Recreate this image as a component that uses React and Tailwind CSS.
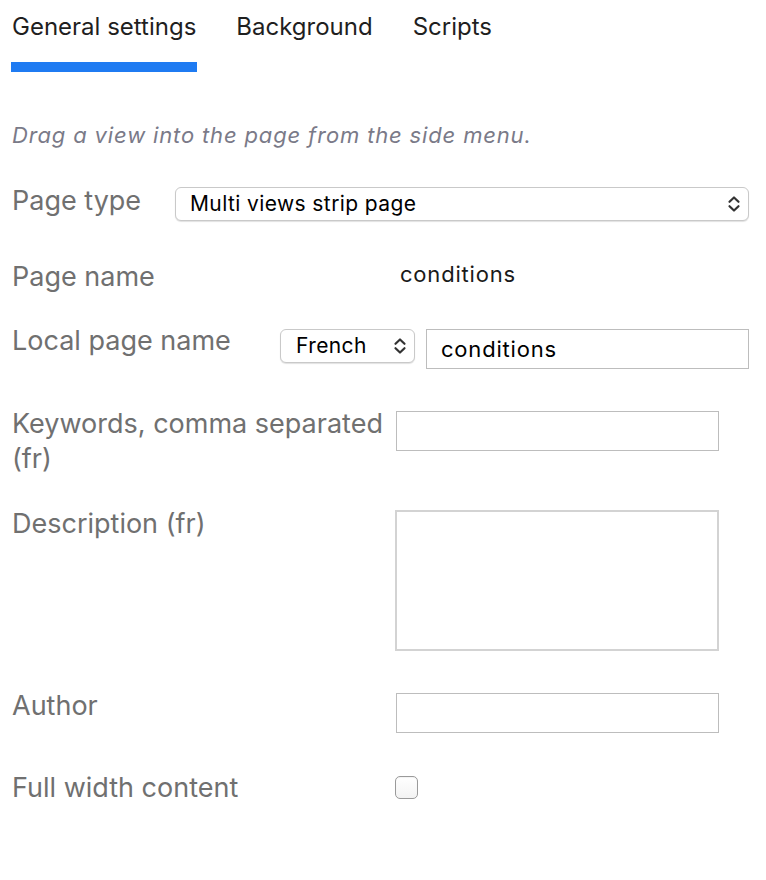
import React from "react";

function Chevrons({ className = "" }) {
  return (
    <svg className={className} width="14" height="18" viewBox="0 0 14 18" fill="none" stroke="#333" strokeWidth="2.2" strokeLinecap="round" strokeLinejoin="round">
      <path d="M2.5 6.8 L7 2.5 L11.5 6.8" />
      <path d="M2.5 11.2 L7 15.5 L11.5 11.2" />
    </svg>
  );
}

const font = { fontFamily: "Inter, 'Liberation Sans', sans-serif" };

export default function App() {
  return (
    <div className="w-[766px] h-[880px] bg-white overflow-hidden" style={font}>
      {/* Tabs */}
      <div className="flex pl-[11px] gap-[38px] pt-[9px]">
        <div className="flex flex-col">
          <div className="px-[1px] text-[24px] leading-[36px] text-[#1f1f1f]">General settings</div>
          <div className="mt-[17px] h-[10px] bg-[#1f7bf2]" />
        </div>
        <div className="px-[1px] text-[24px] leading-[36px] text-[#1f1f1f]">Background</div>
        <div className="px-[1px] text-[24px] leading-[36px] text-[#1f1f1f]">Scripts</div>
      </div>

      <div className="pl-[12px]">
        <div className="mt-[48px] text-[22px] leading-[30px] italic tracking-[0.85px] text-[#7a7a88]">
          Drag a view into the page from the side menu.
        </div>

        {/* Page type */}
        <div className="mt-[33px] h-[73px] flex items-start">
          <div className="w-[163px] text-[27px] leading-[36px] text-[#707070]">Page type</div>
          <div className="mt-[4px] w-[574px] h-[34px] flex items-center justify-between pl-[14px] pr-[7px] border border-[#c9c9c9] rounded-[6px] shadow-[0_1px_1px_rgba(0,0,0,0.12)] bg-white text-[21px] tracking-[0.4px] text-black">
            <span>Multi views strip page</span>
            <Chevrons />
          </div>
        </div>

        {/* Page name */}
        <div className="h-[67px] flex items-start">
          <div className="mt-[3px] w-[388px] text-[27px] leading-[36px] text-[#707070]">Page name</div>
          <div className="text-[22px] leading-[36px] tracking-[0.8px] text-[#1a1a1a]">conditions</div>
        </div>

        {/* Local page name */}
        <div className="h-[83px] flex items-start">
          <div className="w-[268px] text-[27px] leading-[36px] text-[#707070]">Local page name</div>
          <div className="mt-[6px] w-[135px] h-[34px] flex items-center justify-between pl-[15px] pr-[7px] border border-[#c9c9c9] rounded-[6px] shadow-[0_1px_1px_rgba(0,0,0,0.12)] bg-white text-[21px] tracking-[0.4px] text-black">
            <span>French</span>
            <Chevrons />
          </div>
          <div className="mt-[6px] ml-[11px] w-[323px] h-[40px] border border-[#bdbdbd] flex items-center pl-[14px] text-[22px] tracking-[0.8px] text-black">
            conditions
          </div>
        </div>

        {/* Keywords */}
        <div className="h-[100px] flex items-start">
          <div className="w-[384px] text-[27px] leading-[35px] text-[#707070]">
            Keywords, comma separated (fr)
          </div>
          <div className="mt-[5px] w-[323px] h-[40px] border border-[#bdbdbd]" />
        </div>

        {/* Description */}
        <div className="h-[182px] flex items-start">
          <div className="w-[383px] text-[27px] leading-[36px] text-[#707070]">Description (fr)</div>
          <div className="mt-[4px] w-[324px] h-[141px] border-2 border-[#d3d3d3]" />
        </div>

        {/* Author */}
        <div className="h-[82px] flex items-start">
          <div className="w-[384px] text-[27px] leading-[36px] text-[#707070]">Author</div>
          <div className="mt-[5px] w-[323px] h-[40px] border border-[#bdbdbd]" />
        </div>

        {/* Full width content */}
        <div className="flex items-start">
          <div className="w-[383px] text-[27px] leading-[36px] text-[#707070]">Full width content</div>
          <div className="mt-[6px] w-[23px] h-[23px] rounded-[5px] border border-[#9a9a9a] bg-gradient-to-b from-white to-[#f3f3f3] shadow-[inset_0_1px_1px_rgba(0,0,0,0.05)]" />
        </div>
      </div>
    </div>
  );
}
